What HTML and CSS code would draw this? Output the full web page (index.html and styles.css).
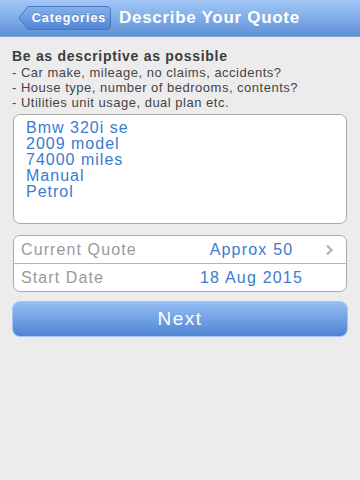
FILE: index.html
```html
<!DOCTYPE html>
<html lang="en">
<head>
    <meta charset="UTF-8">
    <meta name="viewport" content="width=device-width, initial-scale=1.0">
    <title>Describe Your Quote</title>
    <link rel="stylesheet" href="styles.css">
</head>
<body>

    <!-- Navigation bar -->
    <div class="navbar">
        <a class="back-btn" href="#">
            <svg class="back-shape" width="94" height="26" viewBox="0 0 94 26">
                <defs>
                    <linearGradient id="backGrad" x1="0" y1="0" x2="0" y2="1">
                        <stop offset="0" stop-color="#86b2ee"/>
                        <stop offset="1" stop-color="#4f86d3"/>
                    </linearGradient>
                </defs>
                <path d="M1 13 L10 1.5 H88 Q92.5 1.5 92.5 6 V20 Q92.5 24.5 88 24.5 H10 Z" fill="url(#backGrad)" stroke="#4a78bd" stroke-width="1"/>
            </svg>
            <span class="back-label">Categories</span>
        </a>
        <span class="nav-title">Describe Your Quote</span>
    </div>

    <div class="content">
        <!-- Hints -->
        <div class="hints">
            <h1>Be as descriptive as possible</h1>
            <p>- Car make, mileage, no claims, accidents?</p>
            <p>- House type, number of bedrooms, contents?</p>
            <p>- Utilities unit usage, dual plan etc.</p>
        </div>

        <!-- Description box -->
        <div class="description">
            <div>Bmw 320i se</div>
            <div>2009 model</div>
            <div>74000 miles</div>
            <div>Manual</div>
            <div>Petrol</div>
        </div>

        <!-- Quote details -->
        <div class="details">
            <div class="row">
                <span class="label">Current Quote</span>
                <span class="value">Approx 50</span>
                <span class="chevron">
                    <svg width="9" height="12" viewBox="0 0 9 12"><path d="M2 1.5 L6.5 6 L2 10.5" fill="none" stroke="#b3b3b3" stroke-width="2.4"/></svg>
                </span>
            </div>
            <div class="row">
                <span class="label">Start Date</span>
                <span class="value">18 Aug 2015</span>
                <span class="chevron"></span>
            </div>
        </div>

        <button class="next-btn">Next</button>
    </div>

</body>
</html>
```

FILE: styles.css
```css
/* Global styles */
body {
    font-family: "Liberation Sans", Arial, sans-serif;
    background-color: #ececec;
    margin: 0;
    width: 360px;
    height: 480px;
    overflow: hidden;
}

/* Navigation bar */
.navbar {
    height: 36px;
    background: linear-gradient(#a3c7f7, #5d91d7);
    border-bottom: 1px solid #7ea6dc;
    display: flex;
    align-items: center;
    padding-left: 18px;
}

.back-btn {
    position: relative;
    width: 94px;
    height: 26px;
    display: flex;
    align-items: center;
    justify-content: center;
    text-decoration: none;
}

.back-shape {
    position: absolute;
    left: 0;
    top: 0;
}

.back-label {
    position: relative;
    color: white;
    font-weight: bold;
    font-size: 12.5px;
    letter-spacing: 1px;
    padding-left: 8px;
    text-shadow: 0 -1px 0 rgba(0, 0, 0, 0.2);
}

.nav-title {
    color: white;
    font-weight: bold;
    font-size: 17px;
    letter-spacing: 0.7px;
    margin-left: 7px;
}

.content {
    padding: 11px 12px 0 12px;
}

/* Hints */
.hints h1 {
    font-size: 14px;
    font-weight: bold;
    letter-spacing: 0.7px;
    color: #3c3c3c;
    margin: 0 0 1px 0;
}

.hints p {
    font-size: 13px;
    letter-spacing: 0.5px;
    color: #444;
    margin: 0;
    line-height: 15px;
}

/* Description box */
.description {
    margin: 4px 1px 0 1px;
    height: 97px;
    background-color: white;
    border: 1px solid #aaa;
    border-radius: 7px;
    padding: 5px 12px 6px 12px;
    color: #3b7bd0;
    font-size: 16px;
    letter-spacing: 1px;
    line-height: 16px;
}

/* Details table */
.details {
    margin: 11px 1px 0 1px;
    background-color: white;
    border: 1px solid #aaa;
    border-radius: 7px;
}

.row {
    height: 27px;
    display: flex;
    align-items: center;
    padding: 0 8px 0 7px;
}

.row + .row {
    border-top: 1px solid #b5b5b5;
}

.label {
    width: 162px;
    color: #999;
    font-size: 16px;
    letter-spacing: 1.1px;
}

.value {
    flex: 1;
    text-align: center;
    color: #3b7bd0;
    font-size: 16px;
    letter-spacing: 1.2px;
}

.chevron {
    width: 18px;
    display: flex;
    justify-content: center;
}

/* Next button */
.next-btn {
    display: block;
    width: 336px;
    height: 36px;
    margin-top: 9px;
    border: 1px solid #a6c6f2;
    border-radius: 8px;
    background: linear-gradient(#96bef6, #4e84d2);
    color: white;
    font-family: "Liberation Sans", Arial, sans-serif;
    font-size: 19px;
    letter-spacing: 1.5px;
    cursor: pointer;
}
```
